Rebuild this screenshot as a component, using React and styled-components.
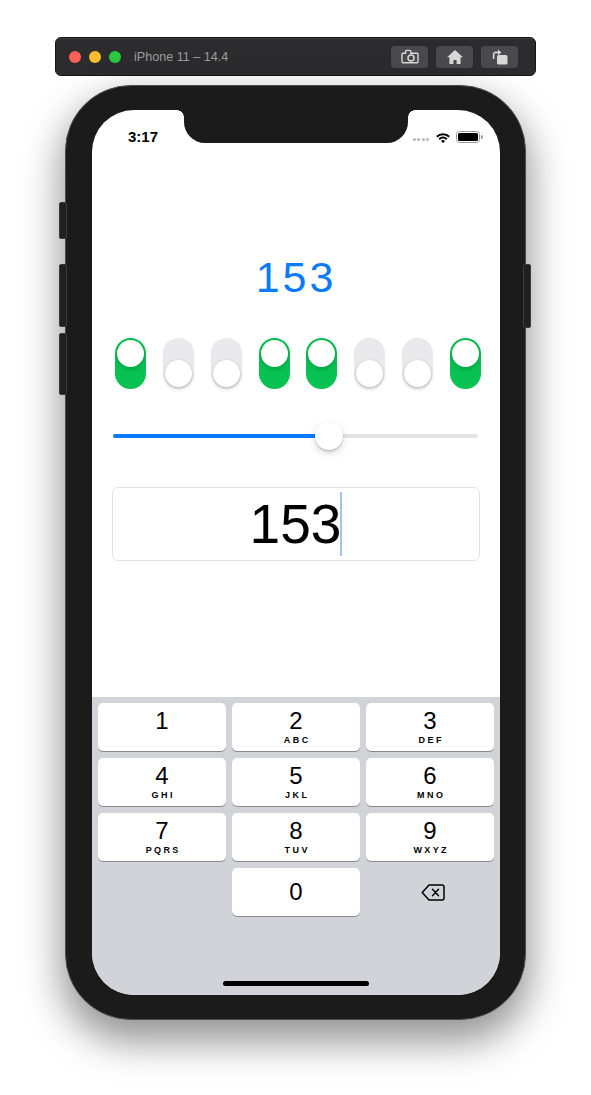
import React from 'react';
import styled, { createGlobalStyle } from 'styled-components';

const colors = {
  blue: "#0a7aff",
  green: "#07c152",
  frame: "#1b1b1b",
  keyboard: "#d1d3d9",
  chrome: "#2c2c2e",
  chromeButton: "#4a4a4c",
  chromeIcon: "#d8d8d8"
}

const GlobalStyle = createGlobalStyle`
  html, body {
    margin:0;
    padding:0;
    background:#fff;
  }
  body {
    font-family:'Liberation Sans', Arial, sans-serif;
  }
`;

const Page = styled.div`
  width:591px;
  height:1095px;
  overflow:hidden;
  display:flex;
  flex-direction:column;
  align-items:center;
  padding-top:37px;
  box-sizing:border-box;
`;

const TitleBar = styled.div`
  width:481px;
  height:39px;
  box-sizing:border-box;
  border-radius:6px;
  background:${colors.chrome};
  border:1px solid #151515;
  box-shadow:inset 0 1px 0 #3e3e40;
  display:flex;
  align-items:center;
  padding:0 17px 0 13px;
`;

const Lights = styled.div`
  display:flex;
  gap:8px;
`;

const Light = styled.span`
  width:12px;
  height:12px;
  border-radius:50%;
  background:${p => p.$color};
`;

const Title = styled.span`
  margin-left:13px;
  font-size:12.6px;
  color:#9d9d9f;
  flex:1;
`;

const ChromeButtons = styled.div`
  display:flex;
  gap:8px;
`;

const ChromeButton = styled.div`
  width:37px;
  height:22px;
  border-radius:4px;
  background:${colors.chromeButton};
  display:flex;
  align-items:center;
  justify-content:center;
`;

const Phone = styled.div`
  position:relative;
  margin-top:9px;
  width:461px;
  height:935px;
  box-sizing:border-box;
  border-radius:66px;
  border:1px solid #4d4d4d;
  background:${colors.frame};
  padding:24px 25px 24px 26px;
  box-shadow:0 18px 38px 4px rgba(0,0,0,0.42);
`;

const SideButton = styled.div`
  position:absolute;
  ${p => p.$right ? 'right:-6px;' : 'left:-7px;'}
  top:${p => p.$top}px;
  width:6px;
  height:${p => p.$h}px;
  border-radius:2px;
  background:#202020;
  border:1px solid #3b3b3b;
`;

const Screen = styled.div`
  position:relative;
  width:408px;
  height:885px;
  border-radius:42px;
  overflow:hidden;
  background:#fff;
  display:flex;
  flex-direction:column;
`;

const Notch = styled.div`
  position:absolute;
  top:0;
  left:50%;
  transform:translateX(-50%);
  width:224px;
  height:33px;
  background:${colors.frame};
  border-radius:0 0 21px 21px;

  &::before, &::after {
    content:'';
    position:absolute;
    top:0;
    width:7px;
    height:7px;
  }
  &::before {
    left:-7px;
    background:radial-gradient(circle at 0 100%, transparent 6.5px, ${colors.frame} 7px);
  }
  &::after {
    right:-7px;
    background:radial-gradient(circle at 100% 100%, transparent 6.5px, ${colors.frame} 7px);
  }
`;

const StatusBar = styled.div`
  height:52px;
  flex-shrink:0;
  box-sizing:border-box;
  display:flex;
  justify-content:space-between;
  align-items:flex-start;
  padding:18px 17px 0 36px;
`;

const Time = styled.span`
  font-size:15px;
  line-height:17px;
  font-weight:700;
  color:#000;
`;

const StatusIcons = styled.div`
  display:flex;
  align-items:center;
  gap:5px;
  margin-top:3px;
`;

const SignalDots = styled.div`
  display:flex;
  gap:1.5px;
  margin-top:5px;
  margin-right:1px;
`;

const Dot = styled.span`
  width:3px;
  height:3px;
  border-radius:50%;
  background:#b8b8b8;
`;

const Content = styled.div`
  flex:1;
  display:flex;
  flex-direction:column;
  padding:0 20px;
`;

const ValueLabel = styled.div`
  margin-top:90px;
  font-size:43px;
  line-height:50px;
  letter-spacing:3px;
  color:${colors.blue};
  text-align:center;
`;

const ToggleRow = styled.div`
  margin-top:36px;
  display:flex;
  justify-content:space-between;
  padding-left:3px;
  margin-right:-1px;
`;

const Toggle = styled.div`
  width:31px;
  height:51px;
  box-sizing:border-box;
  padding:2px;
  border-radius:16px;
  background:${p => p.$on ? colors.green : '#e9e9eb'};
  display:flex;
  flex-direction:column;
  justify-content:${p => p.$on ? 'flex-start' : 'flex-end'};
`;

const Knob = styled.div`
  width:27px;
  height:27px;
  border-radius:50%;
  background:#fff;
  box-shadow:0 2px 4px rgba(0,0,0,0.16), 0 0 0 0.5px rgba(0,0,0,0.06);
`;

const SliderWrap = styled.div`
  margin-top:32px;
  height:30px;
  padding:0 1px 0 1px;
  margin-right:1px;
  display:flex;
  align-items:center;
`;

const Track = styled.div`
  position:relative;
  flex:1;
  height:4px;
  border-radius:2px;
  background:#e3e3e5;
`;

const Fill = styled.div`
  position:absolute;
  left:0;
  top:0;
  bottom:0;
  border-radius:2px;
  background:${colors.blue};
`;

const Thumb = styled.div`
  position:absolute;
  top:50%;
  width:28px;
  height:28px;
  margin-top:-14px;
  border-radius:50%;
  background:#fff;
  box-shadow:0 3px 8px rgba(0,0,0,0.15), 0 1px 1px rgba(0,0,0,0.14), 0 3px 1px rgba(0,0,0,0.05);
`;

const Field = styled.div`
  margin-top:36px;
  height:74px;
  box-sizing:border-box;
  border:1px solid #e2e2e4;
  border-radius:6px;
  display:flex;
  align-items:center;
  justify-content:center;
`;

const FieldText = styled.span`
  font-size:55px;
  line-height:1;
  color:#000;
`;

const Caret = styled.span`
  width:2px;
  height:64px;
  margin-left:-1px;
  background:#a4c0f4;
`;

const Keyboard = styled.div`
  height:298px;
  flex-shrink:0;
  box-sizing:border-box;
  background:${colors.keyboard};
  padding:6px 6px 0;
  display:flex;
  flex-direction:column;
`;

const KeyGrid = styled.div`
  display:grid;
  grid-template-columns:repeat(3, 128px);
  grid-auto-rows:48px;
  gap:7px 6px;
`;

const Key = styled.div`
  background:#fff;
  border-radius:5px;
  box-shadow:0 1px 0 #898a8e;
  display:flex;
  flex-direction:column;
  align-items:center;
  justify-content:${p => p.$center ? 'center' : 'flex-start'};
  padding-top:${p => p.$center ? 0 : 6}px;
  box-sizing:border-box;
`;

const KeyDigit = styled.span`
  font-size:24px;
  line-height:24px;
  color:#000;
`;

const KeyLetters = styled.span`
  margin-top:2px;
  font-size:9px;
  line-height:10px;
  font-weight:700;
  letter-spacing:2.4px;
  padding-left:2.4px;
  color:#000;
`;

const KeySlot = styled.div`
  display:flex;
  align-items:center;
  justify-content:center;
  padding-left:${p => p.$shift || 0}px;
`;

const HomeBar = styled.div`
  margin-top:auto;
  margin-bottom:9px;
  align-self:center;
  width:146px;
  height:5px;
  border-radius:3px;
  background:#000;
`;

const CameraIcon = () => (
  <svg width="18" height="15" viewBox="0 0 18 15">
    <path d="M2 4.2h2.6V2.4a1 1 0 0 1 1-1h3.2a1 1 0 0 1 1 1v1.8H16a1 1 0 0 1 1 1v7.6a1 1 0 0 1-1 1H2a1 1 0 0 1-1-1V5.2a1 1 0 0 1 1-1z" fill="none" stroke={colors.chromeIcon} strokeWidth="1.4" />
    <circle cx="10" cy="9" r="3" fill="none" stroke={colors.chromeIcon} strokeWidth="1.5" />
  </svg>
);

const HomeIcon = () => (
  <svg width="18" height="16" viewBox="0 0 18 16">
    <path d="M9 1 L1 8.2 h2.4 V15 h4 v-4 h3.2 v4 h4 V8.2 H17 Z" fill={colors.chromeIcon} />
  </svg>
);

const RotateIcon = () => (
  <svg width="18" height="16" viewBox="0 0 18 16">
    <rect x="6" y="6" width="10.5" height="9.5" rx="1.6" fill={colors.chromeIcon} />
    <path d="M2.6 10 V5.4 a2 2 0 0 1 2 -2 H7.5" fill="none" stroke={colors.chromeIcon} strokeWidth="1.6" />
    <path d="M7 0.6 L10.4 3.4 L7 6.2 Z" fill={colors.chromeIcon} />
  </svg>
);

const WifiIcon = () => (
  <svg width="16" height="11" viewBox="0 0 16 11">
    <path d="M1.8 4.8 A8.7 8.7 0 0 1 14.2 4.8" fill="none" stroke="#000" strokeWidth="2" />
    <path d="M4.2 7.2 A5.3 5.3 0 0 1 11.8 7.2" fill="none" stroke="#000" strokeWidth="2" />
    <path d="M8 11 L6 9 A2.8 2.8 0 0 1 10 9 Z" fill="#000" />
  </svg>
);

const BatteryIcon = () => (
  <svg width="27" height="12" viewBox="0 0 27 12">
    <rect x="0.5" y="0.5" width="23" height="11" rx="3" fill="none" stroke="#999" strokeWidth="1" />
    <rect x="2" y="2" width="20" height="8" rx="1.6" fill="#000" />
    <path d="M25 4 a1.5 1.5 0 0 1 0 4 z" fill="#999" />
  </svg>
);

const DeleteIcon = () => (
  <svg width="24" height="17" viewBox="0 0 24 17">
    <path d="M8 1 H21 a2 2 0 0 1 2 2 V14 a2 2 0 0 1 -2 2 H8 L1.2 8.5 Z" fill="none" stroke="#000" strokeWidth="1.5" strokeLinejoin="round" />
    <path d="M11.5 5.2 L17.5 11.8 M17.5 5.2 L11.5 11.8" stroke="#000" strokeWidth="1.5" strokeLinecap="round" />
  </svg>
);

const keys = [
  ['1', ''], ['2', 'ABC'], ['3', 'DEF'],
  ['4', 'GHI'], ['5', 'JKL'], ['6', 'MNO'],
  ['7', 'PQRS'], ['8', 'TUV'], ['9', 'WXYZ'],
];

const App = () => {
  const value = 153;
  const bits = value.toString(2).padStart(8, '0').split('');
  const fraction = value / 255;
  const trackWidth = 364;
  const thumbLeft = fraction * (trackWidth - 28);

  return (
    <React.Fragment>
      <GlobalStyle />
      <Page>
        <TitleBar>
          <Lights>
            <Light $color="#fe5f57" />
            <Light $color="#febc2e" />
            <Light $color="#28c840" />
          </Lights>
          <Title>iPhone 11 – 14.4</Title>
          <ChromeButtons>
            <ChromeButton><CameraIcon /></ChromeButton>
            <ChromeButton><HomeIcon /></ChromeButton>
            <ChromeButton><RotateIcon /></ChromeButton>
          </ChromeButtons>
        </TitleBar>

        <Phone>
          <SideButton $top={116} $h={35} />
          <SideButton $top={178} $h={61} />
          <SideButton $top={247} $h={60} />
          <SideButton $right $top={178} $h={62} />
          <Screen>
            <Notch />
            <StatusBar>
              <Time>3:17</Time>
              <StatusIcons>
                <SignalDots><Dot /><Dot /><Dot /><Dot /></SignalDots>
                <WifiIcon />
                <BatteryIcon />
              </StatusIcons>
            </StatusBar>

            <Content>
              <ValueLabel>{value}</ValueLabel>
              <ToggleRow>
                {bits.map((b, i) => (
                  <Toggle key={i} $on={b === '1'}><Knob /></Toggle>
                ))}
              </ToggleRow>
              <SliderWrap>
                <Track>
                  <Fill style={{ width: thumbLeft + 14 }} />
                  <Thumb style={{ left: thumbLeft }} />
                </Track>
              </SliderWrap>
              <Field>
                <FieldText>{value}</FieldText>
                <Caret />
              </Field>
            </Content>

            <Keyboard>
              <KeyGrid>
                {keys.map(([d, l]) => (
                  <Key key={d}>
                    <KeyDigit>{d}</KeyDigit>
                    {l && <KeyLetters>{l}</KeyLetters>}
                  </Key>
                ))}
                <KeySlot />
                <Key $center><KeyDigit>0</KeyDigit></Key>
                <KeySlot $shift={6}><DeleteIcon /></KeySlot>
              </KeyGrid>
              <HomeBar />
            </Keyboard>
          </Screen>
        </Phone>
      </Page>
    </React.Fragment>
  )
}

export default App
